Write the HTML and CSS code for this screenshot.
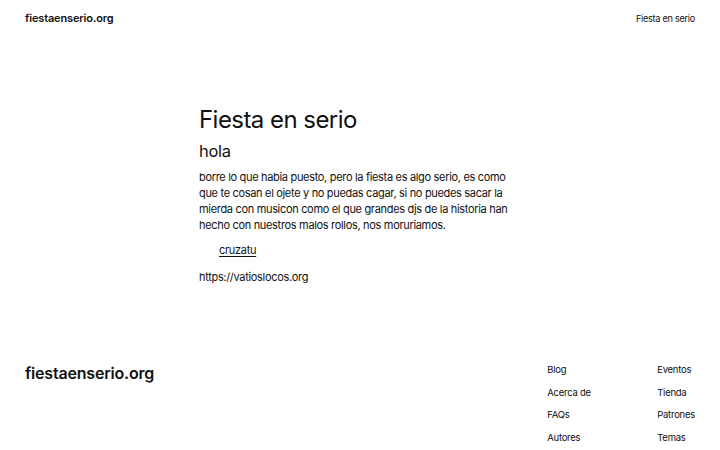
FILE: index.html
```html
<!DOCTYPE html>
<html lang="es">
<head>
<meta charset="utf-8">
<title>fiestaenserio.org</title>
<link rel="stylesheet" href="styles.css">
</head>
<body>
<header class="site-header">
  <a class="logo" href="#">fiestaenserio.org</a>
  <nav class="top-nav"><a href="#">Fiesta en serio</a></nav>
</header>
<main class="content">
  <h1 class="title">Fiesta en serio</h1>
  <h2 class="subtitle">hola</h2>
  <p class="text">borre lo que habia puesto, pero la fiesta es algo serio, es como que te cosan el ojete y no puedas cagar, si no puedes sacar la mierda con musicon como el que grandes djs de la historia han hecho con nuestros malos rollos, nos moruriamos.</p>
  <ul class="links"><li><a href="#">cruzatu</a></li></ul>
  <p class="text">https://vatioslocos.org</p>
</main>
<footer class="site-footer">
  <a class="footer-logo" href="#">fiestaenserio.org</a>
  <div class="footer-cols">
    <ul class="footer-col">
      <li>Blog</li>
      <li>Acerca de</li>
      <li>FAQs</li>
      <li>Autores</li>
    </ul>
    <ul class="footer-col">
      <li>Eventos</li>
      <li>Tienda</li>
      <li>Patrones</li>
      <li>Temas</li>
    </ul>
  </div>
</footer>
</body>
</html>
```
FILE: styles.css
```css
* { box-sizing: border-box; }
html, body { margin: 0; padding: 0; }
body {
  font-family: Inter, "Noto Sans", sans-serif;
  color: #111;
  background: #fff;
  width: 720px;
}
a { color: inherit; text-decoration: none; }
.site-header {
  display: flex;
  justify-content: space-between;
  align-items: center;
  padding: 0 25px;
  height: 36px;
}
.logo {
  font-size: 11px;
  font-weight: 600;
  letter-spacing: -0.15px;
}
.top-nav { font-size: 9.2px; letter-spacing: -0.3px; }
.content {
  width: 322px;
  margin: 68px auto 0 auto;
}
.title {
  font-size: 24px;
  font-weight: 400;
  letter-spacing: -0.55px;
  margin: 0;
  line-height: 32px;
}
.subtitle {
  font-size: 16.5px;
  font-weight: 400;
  margin: 3px 0 0 0;
  line-height: 24px;
  letter-spacing: -0.3px;
}
.text {
  font-size: 11px;
  line-height: 16px;
  letter-spacing: -0.32px;
  margin: 6px 0 0 0;
}
.links {
  list-style: none;
  margin: 9px 0 0 0;
  padding: 0 0 0 20px;
  font-size: 11px;
  line-height: 16px;
  letter-spacing: -0.3px;
}
.links a { text-decoration: underline; text-underline-offset: 2px; }
.links + .text { margin-top: 11px; }
.site-footer {
  display: flex;
  justify-content: space-between;
  padding: 0 25px;
  margin-top: 77px;
}
.footer-logo {
  font-size: 16px;
  font-weight: 600;
  letter-spacing: -0.2px;
  margin-top: 1px;
}
.footer-cols { display: flex; margin-top: 2px; }
.footer-col {
  list-style: none;
  margin: 0;
  padding: 0;
  font-size: 9.5px;
  letter-spacing: -0.25px;
  line-height: 12px;
  display: flex;
  flex-direction: column;
  gap: 10.5px;
}
.footer-col:first-child { width: 110px; margin-left: 1px; }
```
